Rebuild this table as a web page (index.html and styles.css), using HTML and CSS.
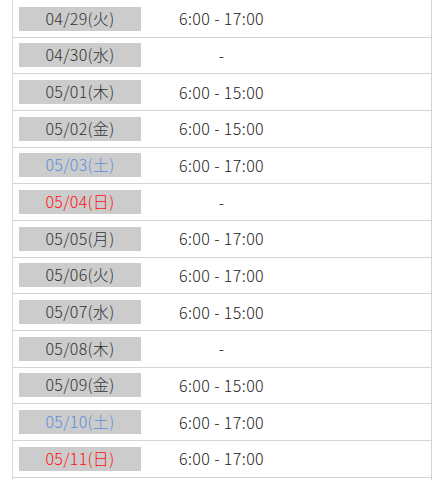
FILE: index.html
```html
<!DOCTYPE html>
<html lang="ja">
<head>
<meta charset="utf-8">
<link rel="stylesheet" href="styles.css">
</head>
<body>
<div class="schedule">
  <div class="row"><div class="date"><span class="box">04/29(火)</span></div><div class="time">6:00 - 17:00</div></div>
  <div class="row"><div class="date"><span class="box">04/30(水)</span></div><div class="time">-</div></div>
  <div class="row"><div class="date"><span class="box">05/01(木)</span></div><div class="time">6:00 - 15:00</div></div>
  <div class="row"><div class="date"><span class="box">05/02(金)</span></div><div class="time">6:00 - 15:00</div></div>
  <div class="row"><div class="date"><span class="box sat">05/03(土)</span></div><div class="time">6:00 - 17:00</div></div>
  <div class="row"><div class="date"><span class="box sun">05/04(日)</span></div><div class="time">-</div></div>
  <div class="row"><div class="date"><span class="box">05/05(月)</span></div><div class="time">6:00 - 17:00</div></div>
  <div class="row"><div class="date"><span class="box">05/06(火)</span></div><div class="time">6:00 - 17:00</div></div>
  <div class="row"><div class="date"><span class="box">05/07(水)</span></div><div class="time">6:00 - 15:00</div></div>
  <div class="row"><div class="date"><span class="box">05/08(木)</span></div><div class="time">-</div></div>
  <div class="row"><div class="date"><span class="box">05/09(金)</span></div><div class="time">6:00 - 15:00</div></div>
  <div class="row"><div class="date"><span class="box sat">05/10(土)</span></div><div class="time">6:00 - 17:00</div></div>
  <div class="row"><div class="date"><span class="box sun">05/11(日)</span></div><div class="time">6:00 - 17:00</div></div>
</div>
</body>
</html>
```
FILE: styles.css
```css
html, body {
  margin: 0;
  padding: 0;
  background: #fff;
  overflow: hidden;
}
body {
  font-family: "Noto Sans CJK JP", "Noto Sans", sans-serif;
  font-size: 16px;
  font-weight: 300;
  color: #222;
}
.schedule {
  margin-left: 12px;
  width: 420px;
  box-sizing: border-box;
  border-left: 1px solid #dcdcdc;
  border-right: 1px solid #d4d4d4;
  padding-top: 1px;
  padding-bottom: 20px;
}
.row {
  display: grid;
  grid-template-columns: 128px 161px 1fr;
  align-items: center;
  height: 36.667px;
  box-sizing: border-box;
  border-bottom: 1px solid #d4d4d4;
}
.date {
  padding-left: 6px;
}
.box {
  display: block;
  width: 122px;
  height: 24px;
  line-height: 23px;
  background: #cccccc;
  color: #333;
  text-align: center;
  letter-spacing: 0.3px;
}
.box.sat { color: #5b8fdc; }
.box.sun { color: #ff1010; }
.time {
  text-align: center;
  line-height: 23px;
  color: #222;
  letter-spacing: 0.4px;
}
```
